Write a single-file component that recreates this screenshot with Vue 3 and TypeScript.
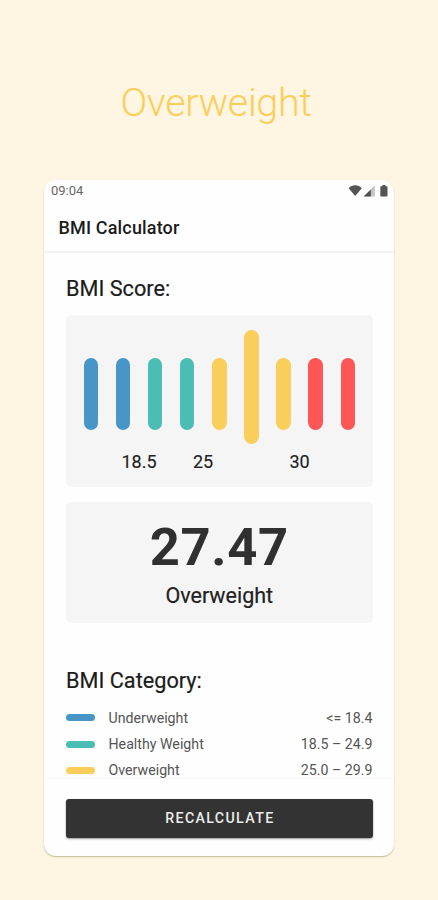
<script setup lang="ts">
interface Bar {
  tone: string
  active?: boolean
}

interface Category {
  label: string
  range: string
  tone: string
}

const bars: Bar[] = [
  { tone: 'blue' },
  { tone: 'blue' },
  { tone: 'teal' },
  { tone: 'teal' },
  { tone: 'yellow' },
  { tone: 'yellow', active: true },
  { tone: 'yellow' },
  { tone: 'red' },
  { tone: 'red' },
]

const categories: Category[] = [
  { label: 'Underweight', range: '<= 18.4', tone: 'blue' },
  { label: 'Healthy Weight', range: '18.5 – 24.9', tone: 'teal' },
  { label: 'Overweight', range: '25.0 – 29.9', tone: 'yellow' },
]
</script>

<template>
  <main class="page">
    <h1 class="headline">Overweight</h1>

    <section class="phone">
      <div class="status">
        <span class="clock">09:04</span>
        <svg class="status-icons" width="42" height="14" viewBox="0 0 42 14">
          <path d="M.6 4.2C4.4.4 10 .4 13.8 4.2L7.2 12Z" fill="#555" />
          <path d="M26.8 1.2V12.4H15.7Z" fill="#c4c4c4" />
          <path d="M22.8 5.4V12.4H15.7Z" fill="#4f4f4f" />
          <path d="M34.4 1h3v1.2h1.2q.9 0 .9.9v8.4q0 .9-.9.9h-5.4q-.9 0-.9-.9V3.1q0-.9.9-.9h1.2z" fill="#555" />
        </svg>
      </div>
      <header class="appbar">BMI Calculator</header>

      <div class="content">
        <h2 class="title">BMI Score:</h2>
        <div class="card score">
          <div class="bars">
            <span v-for="(bar, i) in bars" :key="i" class="bar" :class="[bar.tone, { active: bar.active }]" />
          </div>
          <div class="scale">
            <span>18.5</span>
            <span>25</span>
            <span>30</span>
          </div>
        </div>

        <div class="card result">
          <strong class="value">27.47</strong>
          <span class="verdict">Overweight</span>
        </div>

        <h2 class="title category-title">BMI Category:</h2>
        <ul class="categories">
          <li v-for="c in categories" :key="c.label">
            <i class="pill" :class="c.tone" />
            <span class="name">{{ c.label }}</span>
            <span class="range">{{ c.range }}</span>
          </li>
        </ul>
      </div>

      <footer class="footer">
        <button class="action" type="button">RECALCULATE</button>
      </footer>
    </section>
  </main>
</template>

<style>
body {
  margin: 0;
}
</style>

<style scoped>
.page {
  box-sizing: border-box;
  height: 900px;
  padding: 81px 44px 0;
  overflow: hidden;
  background: #fef6e2;
  font-family: Roboto, sans-serif;
  color: #222;
}
.headline {
  margin: 0 6px 55px 0;
  height: 44px;
  font-size: 39.5px;
  line-height: 44px;
  font-weight: 300;
  letter-spacing: -0.4px;
  text-align: center;
  color: #fbce5a;
  white-space: nowrap;
}
.phone {
  display: flex;
  flex-direction: column;
  width: 350px;
  height: 676px;
  border-radius: 12px;
  background: #fefefe;
  box-shadow: 0 1px 1.5px rgba(90, 90, 30, 0.38);
  overflow: hidden;
}
.status {
  display: flex;
  justify-content: space-between;
  height: 22px;
  padding: 0 4px 0 7px;
}
.clock {
  font-size: 13px;
  line-height: 22px;
  color: #666;
}
.status-icons {
  margin-top: 4px;
}
.appbar {
  height: 49px;
  padding-left: 14.5px;
  border-bottom: 2px solid #f2f2f2;
  font-size: 18px;
  line-height: 51px;
  font-weight: 500;
  letter-spacing: 0.16px;
  color: #1c1c1c;
}
.content {
  flex: 1;
  min-height: 0;
  padding: 21.5px 21.5px 0 22px;
}
.title {
  margin: 0;
  height: 27px;
  font-size: 21.7px;
  line-height: 27px;
  font-weight: 400;
  color: #1c1c1c;
  -webkit-text-stroke: 0.2px;
}
.card {
  box-sizing: border-box;
  border-radius: 5px;
  background: #f5f5f5;
}
.score {
  height: 172px;
  margin-top: 13.5px;
  padding: 14.5px 17.5px 0 17.5px;
}
.bars {
  display: flex;
  align-items: center;
  justify-content: space-between;
  height: 114.5px;
}
.bar {
  width: 14.5px;
  height: 72px;
  margin-top: 15px;
  border-radius: 8px;
}
.bar.active {
  height: 114.5px;
  margin-top: 0;
}
.blue {
  background: #4796c5;
}
.teal {
  background: #4abdb5;
}
.yellow {
  background: #f9ce5b;
}
.red {
  background: #fd5656;
}
.scale {
  display: grid;
  grid-template-columns: 64px 64px 129px;
  margin-left: 23.5px;
  font-size: 18px;
  line-height: 36px;
  text-align: center;
  -webkit-text-stroke: 0.15px;
}
.result {
  display: flex;
  flex-direction: column;
  align-items: center;
  height: 121px;
  margin-top: 15px;
  padding-top: 15px;
}
.value {
  height: 60px;
  font-size: 52.5px;
  line-height: 60px;
  font-weight: 700;
  letter-spacing: 0.7px;
  color: #303030;
}
.verdict {
  margin-top: 5px;
  font-size: 21.5px;
  line-height: 28px;
  -webkit-text-stroke: 0.2px;
}
.category-title {
  margin-top: 44px;
}
.categories {
  margin: 10.5px 0 0;
  padding: 0;
  list-style: none;
}
.categories li {
  display: flex;
  align-items: center;
  height: 26.4px;
  font-size: 14.2px;
  color: #555;
}
.pill {
  width: 28.5px;
  height: 7px;
  margin-right: 14px;
  border-radius: 4px;
}
.range {
  margin-left: auto;
}
.footer {
  height: 57.5px;
  padding: 20px 21.5px 0 22px;
  border-top: 1px solid #fafafa;
}
.action {
  display: block;
  width: 100%;
  height: 39px;
  padding: 0;
  border: 0;
  border-radius: 3px;
  background: #333;
  box-shadow: 0 1px 2px rgba(0, 0, 0, 0.4);
  font: 500 14.2px/39px Roboto, sans-serif;
  letter-spacing: 1.35px;
  text-indent: 1.3px;
  color: #ececec;
}
</style>
